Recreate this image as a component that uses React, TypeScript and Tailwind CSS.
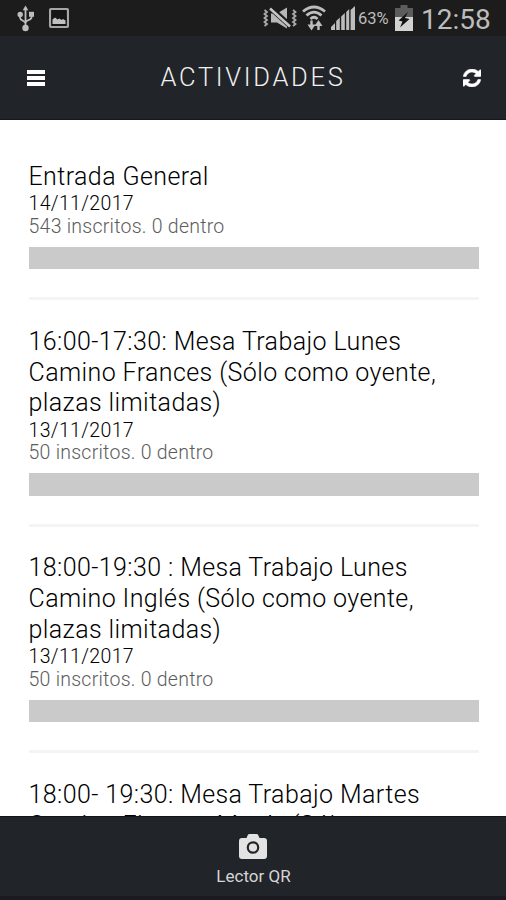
interface Activity {
  title: string[];
  date?: string;
  count?: string;
}

const activities: Activity[] = [
  { title: ['Entrada General'], date: '14/11/2017', count: '543 inscritos. 0 dentro' },
  {
    title: ['16:00-17:30: Mesa Trabajo Lunes', 'Camino Frances (Sólo como oyente,', 'plazas limitadas)'],
    date: '13/11/2017',
    count: '50 inscritos. 0 dentro',
  },
  {
    title: ['18:00-19:30 : Mesa Trabajo Lunes', 'Camino Inglés (Sólo como oyente,', 'plazas limitadas)'],
    date: '13/11/2017',
    count: '50 inscritos. 0 dentro',
  },
  { title: ['18:00- 19:30: Mesa Trabajo Martes', 'Camino Fisterra-Muxía (Sólo'] },
];

function UsbIcon() {
  return (
    <svg className="h-[27px] w-[18px]" viewBox="0 0 18 27" fill="none" stroke="#bdbdbd" strokeWidth="1.8">
      <path d="M8.5 4v18M3 10v2.500c0 3.500 5.500 3 5.500 6M14.500 9v3.500c0 3-6 2-6 5.500" />
      <path d="M8.500 0.500l2.800 4.800H5.700z" fill="#bdbdbd" stroke="none" />
      <circle cx="3.200" cy="9.500" r="2.700" fill="#bdbdbd" stroke="none" />
      <path d="M12 6.800h5v5h-5z" fill="#bdbdbd" stroke="none" />
      <circle cx="8.500" cy="23" r="3.200" fill="#bdbdbd" stroke="none" />
    </svg>
  );
}

function PictureIcon() {
  return (
    <svg className="h-5 w-5" viewBox="0 0 20 20">
      <rect x="1" y="1" width="18" height="18" rx="1.500" fill="#151515" stroke="#a6a6a6" strokeWidth="2.200" />
      <path d="M3.500 16v-4.500l2.500-2 2.500 2 2-1 2 1.500 1.500-1 2.500 1.500V16z" fill="#c0c0c0" />
    </svg>
  );
}

function MuteVibrateIcon() {
  return (
    <svg className="h-6 w-[34px]" viewBox="0 0 34 24" fill="none">
      <path d="M8 7.500h6l10-6v21l-10-6H8z" fill="#b8b8b8" />
      <path d="M7.500 2l20 18" stroke="#1c1c1c" strokeWidth="5.500" />
      <path d="M7 2.500l20 18" stroke="#c4c4c4" strokeWidth="2.600" />
      <path
        d="M1.500 4l2.500 2-2.500 2 2.500 2-2.500 2L4 14l-2.500 2L4 18l-2.500 2M30 4l2.500 2L30 8l2.500 2-2.500 2 2.500 2-2.500 2 2.500 2-2.500 2"
        stroke="#a8a8a8"
        strokeWidth="1.800"
      />
    </svg>
  );
}

function WifiIcon() {
  return (
    <svg className="h-[26px] w-6" viewBox="0 0 24 26" fill="none" stroke="#bdbdbd" strokeWidth="2.800">
      <path d="M1 6.500Q12-2.500 23 6.500M4.500 10.500Q12 3.800 19.500 10.500M8.500 14Q12 10.500 15.500 14" />
      <path d="M9.500 15.500v5M16.500 25v-6" strokeWidth="2.400" />
      <path d="M5.500 19.500h8l-4 6zM12.500 21h8l-4-6z" fill="#bdbdbd" stroke="none" />
    </svg>
  );
}

function SignalIcon() {
  return (
    <svg className="h-6 w-6" viewBox="0 0 24 24" fill="#bdbdbd">
      <path d="M0 24v-3l4-4v7zM5.200 24v-9l3.600-3.600V24zM10.200 24V10.500l3.600-3.600V24zM15.200 24V6l3-3v21zM19.600 24V4L24 0v24z" />
    </svg>
  );
}

function BatteryIcon() {
  return (
    <svg className="h-[26px] w-[18px]" viewBox="0 0 18 26">
      <path d="M5.500 0h7v3H18v23H0V3h5.500z" fill="#5c5c5c" />
      <path d="M0 12h18v14H0z" fill="#d2d2d2" />
      <path d="M13 7L3.500 15.500l4 1-2.500 6 9.500-8.500-4.500-1z" fill="#111" />
    </svg>
  );
}

function RefreshIcon() {
  return (
    <svg className="h-[18px] w-[18px]" viewBox="128 128 1536 1536" fill="#fff" stroke="#fff" strokeWidth="50">
      <path d="M1639 1056q0 5-1 7-64 268-268 434.500t-478 166.500q-146 0-282.500-55t-243.500-157l-129 129q-19 19-45 19t-45-19-19-45v-448q0-26 19-45t45-19h448q26 0 45 19t19 45-19 45l-137 137q71 66 161 102t187 36q134 0 250-65t186-179q11-17 53-117 8-23 30-23h192q13 0 22.500 9.500t9.500 22.500zm25-800v448q0 26-19 45t-45 19h-448q-26 0-45-19t-19-45 19-45l138-138q-148-137-349-137-134 0-250 65t-186 179q-11 17-53 117-8 23-30 23h-199q-13 0-22.500-9.500t-9.500-22.500v-7q65-268 270-434.500t480-166.500q146 0 284 55.500t245 156.500l130-129q19-19 45-19t45 19 19 45z" />
    </svg>
  );
}

function CameraIcon() {
  return (
    <svg className="h-[25px] w-7" viewBox="0 0 28 25">
      <path d="M3 4h4.500l1.200-2.800Q9.200 0 10.500 0h7q1.300 0 1.800 1.200L20.500 4H25q3 0 3 3v15q0 3-3 3H3q-3 0-3-3V7q0-3 3-3z" fill="#e3e3e3" />
      <circle cx="14" cy="13.500" r="5.200" fill="#e3e3e3" stroke="#212429" strokeWidth="2.200" />
    </svg>
  );
}

function ActivityRow({ title, date, count }: Activity) {
  return (
    <article className="whitespace-nowrap">
      <h2 className="mb-[0.500px] text-[25px] leading-[30.800px] font-light tracking-[0.400px] text-black">
        {title.map((line) => (
          <span key={line} className="block">{line}</span>
        ))}
      </h2>
      {date && (
        <div className="mb-[26.400px] border-b-[3px] border-[#f4f4f4] pb-7">
          <p className="text-[19.500px] leading-[22.600px] font-light tracking-[0.350px] text-black">{date}</p>
          <p className="text-[19.500px] leading-[22.600px] font-light tracking-[0.250px] text-[#5c5c5c]">{count}</p>
          <div className="mt-[8.500px] h-[22.500px] bg-[#cacaca]" />
        </div>
      )}
    </article>
  );
}

export default function App() {
  return (
    <div className="flex h-[900px] w-[506px] flex-col overflow-hidden bg-white font-['Roboto',sans-serif]">
      <div className="flex h-9 shrink-0 items-center bg-[#1c1c1c] pr-[15px] pl-[17px] text-[#bdbdbd]">
        <UsbIcon />
        <div className="ml-[14px]"><PictureIcon /></div>
        <div className="ml-auto flex items-center">
          <MuteVibrateIcon />
          <div className="ml-[5px]"><WifiIcon /></div>
          <div className="ml-[5px]"><SignalIcon /></div>
          <span className="ml-[3px] w-[31px] pt-[2px] text-[16.500px] whitespace-nowrap">63%</span>
          <div className="ml-[6px]"><BatteryIcon /></div>
          <span className="ml-[8px] w-[70px] pt-[3px] text-[28px] leading-9 whitespace-nowrap">12:58</span>
        </div>
      </div>
      <header className="flex h-[84px] shrink-0 items-center justify-between border-b border-[#15171a] bg-[#212429] pr-[25px] pl-[27px]">
        <button aria-label="Menú" className="flex w-[18px] flex-col gap-[2px]">
          <span className="h-[4px] bg-white" />
          <span className="h-[4px] bg-white" />
          <span className="h-[4px] bg-white" />
        </button>
        <h1 className="pr-[2px] pb-px text-[25.500px] font-light tracking-[2.700px] text-[#f0f0f0]">ACTIVIDADES</h1>
        <button aria-label="Actualizar"><RefreshIcon /></button>
      </header>
      <main className="min-h-0 flex-1 overflow-hidden pt-[42px] pr-[27.500px] pl-[28.500px]">
        {activities.map((a) => (
          <ActivityRow key={a.title[0]} {...a} />
        ))}
      </main>
      <footer className="flex h-[84px] shrink-0 flex-col items-center border-t border-b-4 border-t-[#111315] border-b-[#1b1a20] bg-[#212429] pt-[17px]">
        <CameraIcon />
        <span className="mt-[5px] pl-px text-[17px] leading-6 text-[#d5d5d5]">Lector QR</span>
      </footer>
    </div>
  );
}
